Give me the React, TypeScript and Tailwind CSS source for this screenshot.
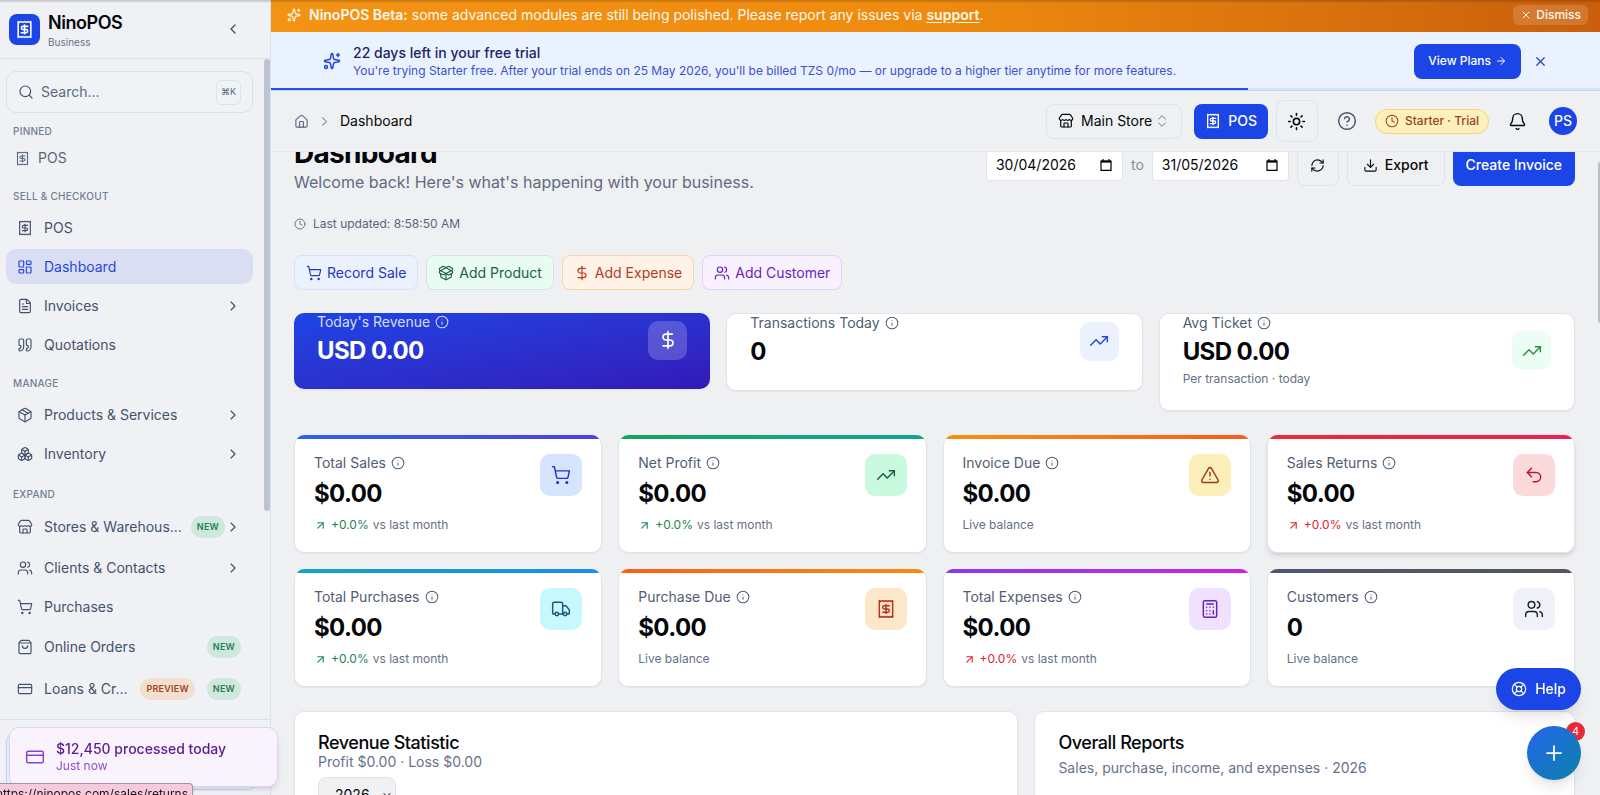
import React from 'react';
import {
  ArrowRight,
  ArrowUpRight,
  Bell,
  Boxes,
  Calculator,
  ChevronDown,
  ChevronLeft,
  ChevronRight,
  ChevronsUpDown,
  CircleQuestionMark,
  Clock,
  CreditCard,
  DollarSign,
  Download,
  FileText,
  House,
  Info,
  LayoutDashboard,
  LifeBuoy,
  Package,
  PackageOpen,
  Plus,
  Quote,
  RefreshCw,
  Search,
  ShoppingBag,
  ShoppingCart,
  Sparkles,
  Store,
  Sun,
  TrendingUp,
  TriangleAlert,
  Truck,
  Undo2,
  Users,
  X,
} from 'lucide-react';

type IconProps = { className?: string; strokeWidth?: number };
type Icon = React.ComponentType<IconProps>;

function Receipt({ className, strokeWidth = 2 }: IconProps) {
  return (
    <svg
      viewBox="0 0 24 24"
      fill="none"
      stroke="currentColor"
      strokeWidth={strokeWidth}
      strokeLinecap="round"
      strokeLinejoin="round"
      className={className}
      aria-hidden="true"
    >
      <path d="M4 2v20l2-1 2 1 2-1 2 1 2-1 2 1 2-1 2 1V2l-2 1-2-1-2 1-2-1-2 1-2-1-2 1Z" />
      <path d="M16 8h-6a2 2 0 1 0 0 4h4a2 2 0 1 1 0 4H8" />
      <path d="M12 17.5v-11" />
    </svg>
  );
}

function CalendarGlyph({ className }: IconProps) {
  return (
    <svg viewBox="0 0 12 12" fill="none" stroke="currentColor" className={className} aria-hidden="true">
      <path d="M1 2h10v9.4H1z" strokeWidth="1.2" />
      <path d="M1 2.6h10" strokeWidth="2" />
      <path d="M3 0v2M9 0v2" strokeWidth="1.2" />
    </svg>
  );
}

type NavEntry = { label: string; icon: Icon; active?: boolean; expandable?: boolean; badges?: string[] };

const sections: { title: string; items: NavEntry[] }[] = [
  {
    title: 'SELL & CHECKOUT',
    items: [
      { label: 'POS', icon: Receipt },
      { label: 'Dashboard', icon: LayoutDashboard, active: true },
      { label: 'Invoices', icon: FileText, expandable: true },
      { label: 'Quotations', icon: Quote },
    ],
  },
  {
    title: 'MANAGE',
    items: [
      { label: 'Products & Services', icon: Package, expandable: true },
      { label: 'Inventory', icon: Boxes, expandable: true },
    ],
  },
  {
    title: 'EXPAND',
    items: [
      { label: 'Stores & Warehous...', icon: Store, expandable: true, badges: ['NEW'] },
      { label: 'Clients & Contacts', icon: Users, expandable: true },
      { label: 'Purchases', icon: ShoppingCart },
      { label: 'Online Orders', icon: ShoppingBag, badges: ['NEW'] },
      { label: 'Loans & Cr...', icon: CreditCard, badges: ['PREVIEW', 'NEW'] },
    ],
  },
];

function NavBadge({ text }: { text: string }) {
  return (
    <span
      className={`flex h-[22px] shrink-0 items-center rounded-full px-1.5 text-[9px] font-semibold tracking-wide ${
        text === 'NEW' ? 'bg-[#cfe8de] text-[#1f8055]' : 'bg-[#f1e0cf] text-[#a4431d]'
      }`}
    >
      {text}
    </span>
  );
}

function NavRow({ item }: { item: NavEntry }) {
  const I = item.icon;
  return (
    <li>
      <a
        href="#"
        className={`flex items-center rounded-[10px] pr-3 pl-[11px] text-sm ${item.badges ? 'h-[38px]' : 'h-[35px]'} ${
          item.active ? 'bg-[#dadef3] text-[#2747e0]' : 'text-[#46526a]'
        }`}
      >
        <I className="size-4 shrink-0" strokeWidth={1.75} />
        <span className="ml-[11px] flex-1 whitespace-nowrap">{item.label}</span>
        {item.badges && (
          <span className="ml-1.5 flex gap-3">
            {item.badges.map((b) => (
              <NavBadge key={b} text={b} />
            ))}
          </span>
        )}
        {item.expandable && <ChevronRight className="size-4 shrink-0" strokeWidth={1.75} />}
      </a>
    </li>
  );
}

function Sidebar() {
  return (
    <aside className="relative flex w-[271px] shrink-0 flex-col border-r border-[#dde2ee] bg-[#eff1f4]">
      <div className="flex h-[59px] shrink-0 items-center border-b border-[#dbe1f0] pl-[9px] pr-[29px]">
        <div className="flex size-[31px] items-center justify-center rounded-lg bg-[#1b45e6] text-white">
          <Receipt className="size-[19px]" />
        </div>
        <div className="ml-2 flex-1 pt-0.5">
          <p className="text-lg leading-6 font-semibold tracking-tight text-[#05070c]">NinoPOS</p>
          <p className="text-[10px] leading-[14px] text-[#66728a]">Business</p>
        </div>
        <button type="button" aria-label="Collapse sidebar" className="text-[#46526a]">
          <ChevronLeft className="size-4" />
        </button>
      </div>

      <div className="min-h-0 flex-1 overflow-hidden pt-3 pr-[17px] pl-1.5">
        <label className="flex h-[42px] items-center rounded-[10px] border border-[#d9e2f0] bg-[#eff3f6] px-[11px]">
          <Search className="size-4 text-[#46526a]" strokeWidth={1.75} />
          <input
            type="text"
            placeholder="Search..."
            aria-label="Search"
            className="ml-[7px] w-0 min-w-0 flex-1 bg-transparent text-sm outline-none placeholder:text-[#5d687d]"
          />
          <kbd className="flex h-[25px] w-[25px] items-center justify-center rounded-[5px] border border-[#dfe3ec] font-['Inter'] text-[9px] text-[#5d687d]">
            ⌘K
          </kbd>
        </label>

        <nav aria-label="Main">
          <h2 className="mt-2.5 px-[7px] text-[10px] leading-4 font-medium tracking-wide text-[#727e93]">PINNED</h2>
          <a href="#" className="mt-1 flex h-[30px] items-center px-[9px] text-sm text-[#5a667c]">
            <Receipt className="size-[15px]" strokeWidth={1.75} />
            <span className="ml-2">POS</span>
          </a>
          {sections.map((s, i) => (
            <section key={s.title} className={i === 1 ? 'mt-[13px]' : 'mt-[15px]'}>
              <h2 className="px-[7px] text-[10px] leading-4 font-medium tracking-wide text-[#727e93]">{s.title}</h2>
              <ul className="mt-1.5 flex flex-col gap-1">
                {s.items.map((item) => (
                  <NavRow key={item.label} item={item} />
                ))}
              </ul>
            </section>
          ))}
        </nav>
      </div>
      <div className="absolute top-[59px] right-0 h-[452px] w-1.5 rounded-full bg-[#bdc4d1]" />
      <div className="h-[76px] shrink-0 border-t border-[#dbe1f0]" />
    </aside>
  );
}

function BetaBanner() {
  return (
    <div className="flex h-8 shrink-0 items-center bg-linear-to-r from-[#f39314] via-[#ef8b0f] to-[#c95f0c] pr-3 pb-0.5 pl-4 text-sm text-[#fff8ec]">
      <Sparkles className="size-[14px]" />
      <p className="ml-2 flex-1">
        <strong className="font-semibold">NinoPOS Beta:</strong> some advanced modules are still being polished. Please
        report any issues via{' '}
        <a href="#" className="font-semibold underline underline-offset-2">
          support
        </a>
        .
      </p>
      <button type="button" className="flex h-5 items-center gap-1 rounded-md bg-white/15 px-[7px] text-xs font-medium">
        <X className="size-3" />
        Dismiss
      </button>
    </div>
  );
}

function TrialBanner() {
  return (
    <div className="shrink-0 bg-[#eaf2ff]">
      <div className="flex h-14 items-center pt-0.5 pr-[52px] pl-[52px]">
        <Sparkles className="size-[18px] text-[#2444e0]" />
        <div className="ml-3 flex-1">
          <p className="text-sm leading-[18px] font-medium text-[#1a2466]">22 days left in your free trial</p>
          <p className="text-xs leading-[17px] text-[#3d50cf]">
            You're trying Starter free. After your trial ends on 25 May 2026, you'll be billed TZS 0/mo — or upgrade to
            a higher tier anytime for more features.
          </p>
        </div>
        <button
          type="button"
          className="flex h-[35px] items-center gap-1 rounded-lg bg-[#1b45e6] px-[14px] text-xs font-medium text-white"
        >
          View Plans <ArrowRight className="size-3" />
        </button>
        <button type="button" aria-label="Close" className="ml-3 text-[#2444c8]">
          <X className="size-[15px]" />
        </button>
      </div>
      <div className="h-[3px] border-b border-[#c3d8f6] bg-[#d3e3fb]">
        <div className="h-0.5 w-[73.5%] bg-[#2a4deb]" />
      </div>
    </div>
  );
}

function TopBar() {
  return (
    <header className="flex h-[61px] shrink-0 items-center border-b border-[#e3e5ea] px-[23px]">
      <nav aria-label="Breadcrumb" className="flex flex-1 items-center text-sm">
        <a href="#" aria-label="Home" className="text-[#5a667c]">
          <House className="size-[15px]" strokeWidth={1.75} />
        </a>
        <ChevronRight className="ml-2 size-[15px] text-[#9099a8]" strokeWidth={1.75} />
        <span className="ml-2 text-[#05070c]">Dashboard</span>
      </nav>
      <button
        type="button"
        className="flex h-[35px] items-center rounded-lg border border-[#dfe3ed] px-[11px] text-sm text-[#05070c]"
      >
        <Store className="size-4" strokeWidth={1.75} />
        <span className="ml-[7px]">Main Store</span>
        <ChevronsUpDown className="ml-0.5 size-4 text-[#6b7280]" strokeWidth={1.5} />
      </button>
      <button
        type="button"
        className="ml-3 flex h-[35px] items-center gap-[7px] rounded-lg bg-[#1b45e6] px-[11px] text-sm font-medium text-white"
      >
        <Receipt className="size-4" />
        POS
      </button>
      <button
        type="button"
        aria-label="Toggle theme"
        className="ml-2 flex size-[42px] items-center justify-center rounded-lg border border-[#dfe3ed] text-[#05070c]"
      >
        <Sun className="size-[19px]" />
      </button>
      <button type="button" aria-label="Help" className="ml-[19px] text-[#46526a]">
        <CircleQuestionMark className="size-5" strokeWidth={1.75} />
      </button>
      <span className="ml-[18px] flex h-[25px] items-center gap-1.5 rounded-full border border-[#f9d56a] bg-[#fdf0bd] px-[9px] text-xs font-medium text-[#9a431a]">
        <Clock className="size-[14px]" strokeWidth={1.75} />
        Starter · Trial
      </span>
      <button type="button" aria-label="Notifications" className="ml-[19px] text-[#05070c]">
        <Bell className="size-[19px]" strokeWidth={1.75} />
      </button>
      <button
        type="button"
        aria-label="Account"
        className="ml-[22px] flex size-7 items-center justify-center rounded-full bg-[#1b45e6] text-sm font-medium text-white"
      >
        PS
      </button>
    </header>
  );
}

function DateField({ label, value }: { label: string; value: string }) {
  return (
    <label className="flex h-[31px] w-[137px] items-center rounded-sm border border-[#dfe3ed] bg-white pr-[10px] pl-[9px]">
      <input
        type="text"
        aria-label={label}
        defaultValue={value}
        className="w-0 min-w-0 flex-1 text-sm text-[#05070c] outline-none"
      />
      <CalendarGlyph className="size-3 text-black" />
    </label>
  );
}

function PageHead() {
  return (
    <div className="flex items-start justify-between">
      <div>
        <h1 className="text-[28px] leading-[34px] font-bold tracking-tight text-[#05070c]">Dashboard</h1>
        <p className="text-base leading-6 text-[#5f6b80]">Welcome back! Here's what's happening with your business.</p>
        <p className="mt-[22px] flex items-center gap-[7px] text-xs leading-4 text-[#5a667c]">
          <Clock className="size-3" strokeWidth={1.75} />
          Last updated: 8:58:50 AM
        </p>
      </div>
      <div className="mt-2 flex items-center text-sm">
        <DateField label="From date" value="30/04/2026" />
        <span className="mx-2 text-[#858e9d]">to</span>
        <DateField label="To date" value="31/05/2026" />
        <button
          type="button"
          aria-label="Refresh"
          className="ml-2 flex size-[42px] items-center justify-center rounded-lg border border-[#dfe3ed] text-[#05070c]"
        >
          <RefreshCw className="size-[15px]" strokeWidth={1.75} />
        </button>
        <button
          type="button"
          className="ml-2 flex h-[42px] items-center gap-[7px] rounded-lg border border-[#dfe3ed] px-[15px] font-medium text-[#05070c]"
        >
          <Download className="size-[15px]" strokeWidth={1.75} />
          Export
        </button>
        <button type="button" className="ml-2 h-[42px] rounded-lg bg-[#1b45e6] px-[13px] font-medium text-white">
          Create Invoice
        </button>
      </div>
    </div>
  );
}

const quickActions: { label: string; icon: Icon; tone: string }[] = [
  { label: 'Record Sale', icon: ShoppingCart, tone: 'border-[#d5e1f8] bg-[#ebf2fe] text-[#2436c4]' },
  { label: 'Add Product', icon: PackageOpen, tone: 'border-[#d3e3e6] bg-[#e8fcf1] text-[#1f6045]' },
  { label: 'Add Expense', icon: DollarSign, tone: 'border-[#fbd3a4] bg-[#fef3e6] text-[#b43a1e]' },
  { label: 'Add Customer', icon: Users, tone: 'border-[#e5cffb] bg-[#f8f2fe] text-[#6a1fbd]' },
];

function StatLabel({ text, className }: { text: string; className: string }) {
  return (
    <p className={`flex items-center gap-[5px] text-sm leading-[18px] ${className}`}>
      {text}
      <Info className="size-[14px]" strokeWidth={1.75} />
    </p>
  );
}

function Highlights() {
  return (
    <div className="mt-[23px] grid grid-cols-3 items-start gap-4">
      <article className="flex items-center justify-between rounded-[10px] bg-linear-to-br from-[#1b45e6] to-[#3219b8] px-[23px] pb-[22px] text-white shadow-xs">
        <div>
          <StatLabel text="Today's Revenue" className="text-[#d5def8]" />
          <p className="mt-1 text-2xl leading-8 font-bold tracking-tight">USD 0.00</p>
        </div>
        <span className="flex size-[39px] items-center justify-center rounded-[10px] bg-white/20">
          <DollarSign className="size-5" />
        </span>
      </article>
      <article className="flex items-center justify-between rounded-[10px] border border-[#dfe3ed] bg-white px-[23px] pb-[22px] shadow-xs">
        <div>
          <StatLabel text="Transactions Today" className="text-[#515d73]" />
          <p className="mt-1 text-2xl leading-8 font-bold tracking-tight text-[#05070c]">0</p>
        </div>
        <span className="flex size-[39px] items-center justify-center rounded-[10px] bg-[#ebf2fe] text-[#2747e0]">
          <TrendingUp className="size-5" strokeWidth={1.75} />
        </span>
      </article>
      <article className="flex items-center justify-between rounded-[10px] border border-[#dfe3ed] bg-white px-[23px] pb-[23px] shadow-xs">
        <div>
          <StatLabel text="Avg Ticket" className="text-[#515d73]" />
          <p className="mt-1 text-2xl leading-8 font-bold tracking-tight text-[#05070c]">USD 0.00</p>
          <p className="mt-[3px] text-xs leading-4 text-[#667186]">Per transaction · today</p>
        </div>
        <span className="flex size-[39px] items-center justify-center rounded-[10px] bg-[#ecfdf3] text-[#2a9145]">
          <TrendingUp className="size-5" strokeWidth={1.75} />
        </span>
      </article>
    </div>
  );
}

type Stat = { label: string; value: string; trend?: 'up' | 'down'; icon: Icon; bar: string; box: string; raised?: boolean };

const stats: Stat[] = [
  { label: 'Total Sales', value: '$0.00', trend: 'up', icon: ShoppingCart, bar: 'from-[#2b62f0] to-[#4c3fe6]', box: 'bg-[#d6e4fd] text-[#2033cf]' },
  { label: 'Net Profit', value: '$0.00', trend: 'up', icon: TrendingUp, bar: 'from-[#17a35c] to-[#12a594]', box: 'bg-[#c9f9df] text-[#14603f]' },
  { label: 'Invoice Due', value: '$0.00', icon: TriangleAlert, bar: 'from-[#f59110] to-[#f95a1a]', box: 'bg-[#fdefb9] text-[#983c14]' },
  { label: 'Sales Returns', value: '$0.00', trend: 'down', icon: Undo2, bar: 'from-[#ec2a36] to-[#ee1d50]', box: 'bg-[#fcdadb] text-[#b5192a]', raised: true },
  { label: 'Total Purchases', value: '$0.00', trend: 'up', icon: Truck, bar: 'from-[#12a5c4] to-[#1f8bea]', box: 'bg-[#c6f8fe] text-[#175b76]' },
  { label: 'Purchase Due', value: '$0.00', icon: Receipt, bar: 'from-[#f95f1a] to-[#f58d10]', box: 'bg-[#fde7ca] text-[#b5331b]' },
  { label: 'Total Expenses', value: '$0.00', trend: 'down', icon: Calculator, bar: 'from-[#8b34ee] to-[#ce20e2]', box: 'bg-[#f0e1fe] text-[#6a1fbd]' },
  { label: 'Customers', value: '0', icon: Users, bar: 'from-[#4a586e] to-[#54545e]', box: 'bg-[#eff2f8] text-[#1b2333]' },
];

function StatCard({ stat }: { stat: Stat }) {
  const I = stat.icon;
  return (
    <article
      className={`overflow-hidden rounded-[10px] border border-t-0 border-[#dfe3ed] bg-white ${
        stat.raised ? 'shadow-md' : 'shadow-xs'
      }`}
    >
      <div className={`h-1 bg-linear-to-r ${stat.bar}`} />
      <div className="flex items-start justify-between px-[19px] pt-[15px] pb-[19px]">
        <div>
          <StatLabel text={stat.label} className="text-[#515d73]" />
          <p className="mt-1.5 text-2xl leading-8 font-bold tracking-tight text-[#05070c]">{stat.value}</p>
          <p className="mt-[7px] flex items-center text-xs leading-4 text-[#667186]">
            {stat.trend ? (
              <>
                <span
                  className={`flex items-center gap-1 ${stat.trend === 'up' ? 'text-[#1d8450]' : 'text-[#dc2430]'}`}
                >
                  <ArrowUpRight className="size-[13px]" />
                  +0.0%
                </span>
                <span className="ml-1">vs last month</span>
              </>
            ) : (
              'Live balance'
            )}
          </p>
        </div>
        <span className={`flex size-[42px] items-center justify-center rounded-[10px] ${stat.box}`}>
          <I className="size-5" strokeWidth={1.75} />
        </span>
      </div>
    </article>
  );
}

function Reports() {
  return (
    <div className="mt-6 grid grid-cols-[1.34fr_1fr] gap-4">
      <section className="h-72 rounded-[10px] border border-[#dfe3ed] bg-white px-[23px] pt-[21px] shadow-xs">
        <h2 className="text-lg leading-5 font-medium tracking-tight text-[#05070c]">Revenue Statistic</h2>
        <p className="text-sm leading-[18px] text-[#66718a]">Profit $0.00 · Loss $0.00</p>
        <div className="relative mt-1.5 w-[78px]">
          <select
            aria-label="Year"
            defaultValue="2026"
            className="h-[35px] w-full appearance-none rounded-lg border border-[#dfe3ed] bg-[#f0f1f3] pl-4 text-sm text-[#05070c]"
          >
            <option>2026</option>
            <option>2025</option>
          </select>
          <ChevronDown className="pointer-events-none absolute top-3 right-[3px] size-3 text-[#05070c]" />
        </div>
      </section>
      <section className="h-72 rounded-[10px] border border-[#dfe3ed] bg-white px-[23px] pt-[21px] shadow-xs">
        <h2 className="text-lg leading-5 font-medium tracking-tight text-[#05070c]">Overall Reports</h2>
        <p className="mt-1.5 text-sm leading-[18px] text-[#66718a]">Sales, purchase, income, and expenses · 2026</p>
      </section>
    </div>
  );
}

function Overlays() {
  return (
    <>
      <div className="pointer-events-none fixed inset-x-0 top-0 h-[3px] bg-linear-to-b from-black/20 to-transparent" />
      <div className="fixed bottom-[5px] left-1.5 h-[58px] w-[252px] rounded-[10px] border border-[#b9d5fb] bg-[#eef4ff]" />
      <div
        role="status"
        className="fixed bottom-2 left-[9px] flex h-[60px] w-[269px] items-center rounded-[10px] border border-[#e5cffb] bg-[#f9f3fe] pl-[15px] shadow-md"
      >
        <CreditCard className="size-5 text-[#8b3fd0]" strokeWidth={1.75} />
        <div className="ml-[11px]">
          <p className="text-sm leading-[18px] font-medium text-[#5a1a92]">$12,450 processed today</p>
          <p className="text-xs leading-4 text-[#8f4fc9]">Just now</p>
        </div>
      </div>
      <div className="fixed bottom-0 left-0 h-3 overflow-hidden rounded-tr-sm border-t border-r border-[#a9929e] bg-[#f5cadd] pr-1 whitespace-nowrap shadow">
        <p className="mt-px -ml-1 text-xs leading-[18px] text-[#1c1418]">https://ninopos.com/sales/returns</p>
      </div>
      <div className="fixed top-[162px] right-0 h-[161px] w-0.5 rounded-l-full bg-[#b9c0cb]" />
      <button
        type="button"
        className="fixed right-[19px] bottom-[85px] flex h-[42px] items-center gap-2 rounded-full bg-[#1b45e6] px-[15px] text-sm font-medium text-white shadow-lg"
      >
        <LifeBuoy className="size-4" strokeWidth={1.75} />
        Help
      </button>
      <span className="fixed right-[15px] bottom-[54px] flex size-[19px] items-center justify-center rounded-full bg-[#ea2a37] text-[11px] text-white">
        4
      </span>
      <button
        type="button"
        aria-label="Quick add"
        className="fixed right-[19px] bottom-[15px] flex size-[54px] items-center justify-center rounded-full bg-linear-to-br from-[#2563eb] to-[#1280a8] text-white shadow-lg"
      >
        <Plus className="size-6" strokeWidth={1.75} />
      </button>
    </>
  );
}

export default function App() {
  return (
    <div className="flex h-screen overflow-hidden bg-[#eff0f2] font-['Inter',sans-serif] text-[#05070c]">
      <Sidebar />
      <div className="flex min-w-0 flex-1 flex-col">
        <BetaBanner />
        <TrialBanner />
        <TopBar />
        <main className="min-h-0 flex-1 overflow-hidden pr-[25px] pl-[23px]">
          <div className="-mt-4">
            <PageHead />
            <div className="mt-[23px] flex gap-2">
              {quickActions.map(({ label, icon: I, tone }) => (
                <button
                  key={label}
                  type="button"
                  className={`flex h-[35px] items-center gap-[5px] rounded-lg border px-[11px] text-sm ${tone}`}
                >
                  <I className="size-4" strokeWidth={1.75} />
                  {label}
                </button>
              ))}
            </div>
            <Highlights />
            <div className="mt-6 grid grid-cols-4 gap-4">
              {stats.map((s) => (
                <StatCard key={s.label} stat={s} />
              ))}
            </div>
            <Reports />
          </div>
        </main>
      </div>
      <Overlays />
    </div>
  );
}
